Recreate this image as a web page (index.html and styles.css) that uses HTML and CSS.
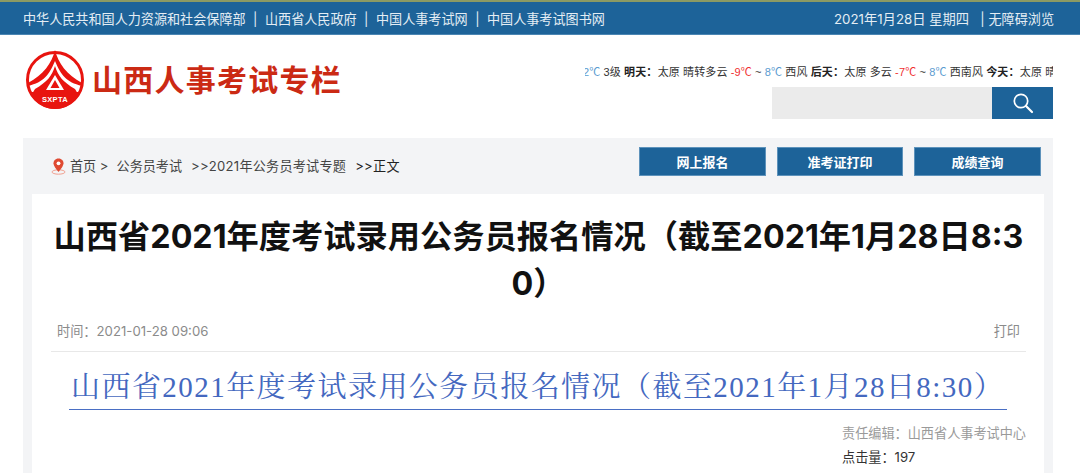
FILE: index.html
```html
<!DOCTYPE html>
<html lang="zh-CN">
<head>
<meta charset="utf-8">
<title>山西人事考试专栏</title>
<link rel="stylesheet" href="styles.css">
</head>
<body>
<div class="strip"></div>
<div class="topbar">
  <div class="links">
    <a>中华人民共和国人力资源和社会保障部</a><i>|</i><a>山西省人民政府</a><i>|</i><a>中国人事考试网</a><i>|</i><a>中国人事考试图书网</a>
  </div>
  <div class="date"><span class="today">2021年1月28日 星期四</span><i>|</i><a>无障碍浏览</a></div>
</div>
<header class="header">
  <div class="brand">
    <svg class="logo" width="60" height="62" viewBox="0 0 60 62">
      <circle cx="30" cy="31" r="27.5" fill="#fff" stroke="#e8140f" stroke-width="3"/>
      <path d="M30 1 C33 14 42 26 57 34 L57 37 C41 33 36 26 30 12 C24 26 19 33 3 37 L3 34 C18 26 27 14 30 1Z" fill="#e8140f"/>
      <path d="M30 17 C33 27 38 33 50 40 L53 45 C55 43 10 43 7 45 L10 40 C22 33 27 27 30 17Z" fill="#e8140f"/>
      <path d="M30 26 L39 41 L21 41Z" fill="#fff"/>
      <path d="M30 31 L34.5 39 L25.5 39Z" fill="#e8140f"/>
      <path d="M5 43 L55 43 C51 53 41 60 30 60 C19 60 9 53 5 43Z" fill="#e8140f"/>
      <text x="30" y="53" class="logo-text">SXPTA</text>
    </svg>
    <div class="site-name">山西人事考试专栏</div>
  </div>
  <div class="tools">
    <div class="ticker"><div class="ticker-inner"><s>2℃</s> 3级 <b>明天：</b> 太原 晴转多云 <em>-9℃</em> ~ <s>8℃</s> 西风 <b>后天：</b> 太原 多云 <em>-7℃</em> ~ <s>8℃</s> 西南风 <b>今天：</b> 太原 晴</div></div>
    <div class="search">
      <div class="search-input"></div>
      <div class="search-btn">
        <svg width="22" height="22" viewBox="0 0 22 22" fill="none" stroke="#fff" stroke-linecap="round"><circle cx="9" cy="9" r="6.7" stroke-width="1.7"/><path d="M14 14 L20 20" stroke-width="2.2"/></svg>
      </div>
    </div>
  </div>
</header>
<main class="panel">
  <div class="crumbs-row">
    <div class="crumbs">
      <svg width="15" height="17" viewBox="0 0 15 17"><ellipse cx="7.5" cy="14" rx="6.5" ry="2.2" fill="none" stroke="#f0a090" stroke-width="1"/><path d="M7.5 0.5 C4.2 0.5 2.5 3 2.5 5.3 C2.5 8.5 7.5 14 7.5 14 C7.5 14 12.5 8.5 12.5 5.3 C12.5 3 10.8 0.5 7.5 0.5Z" fill="#df4a32"/><circle cx="7.5" cy="5.3" r="1.9" fill="#fff"/></svg>
      <span class="c1">首页 &gt;</span><span class="c2">公务员考试</span><span class="c3">&gt;&gt;2021年公务员考试专题</span><span class="c4">&gt;&gt;正文</span>
    </div>
    <nav class="btns"><a class="btn b1">网上报名</a><a class="btn b2">准考证打印</a><a class="btn b3">成绩查询</a></nav>
  </div>
  <article class="article">
    <h1 class="title">山西省2021年度考试录用公务员报名情况（截至2021年1月28日8:30）</h1>
    <div class="meta"><span>时间：2021-01-28 09:06</span><span>打印</span></div>
    <h2 class="doc-title">山西省2021年度考试录用公务员报名情况（截至2021年1月28日8:30）</h2>
    <div class="credits">
      <div class="editor">责任编辑：山西省人事考试中心</div>
      <div class="hits">点击量：197</div>
    </div>
  </article>
</main>
</body>
</html>
```
FILE: styles.css
```css
* { box-sizing: border-box; }
html, body { margin: 0; padding: 0; height: 473px; overflow: hidden; background: #fff; }
body { font-family: Inter, "Noto Sans CJK SC", sans-serif; color: #333; }
a { color: inherit; text-decoration: none; }
i { font-style: normal; }

.strip { height: 2px; background: #8c9a63; }
.topbar {
  height: 33px; background: #1d6399; border-bottom: 1px solid #4b86b3; color: #e4edf4;
  font-size: 13.1px; display: flex; justify-content: space-between; align-items: center;
  padding: 0 26px 0 23px;
}
.links i { margin: 0 7.5px; }
.today { font-size: 13.3px; }
.date i { margin: 0 4px 0 11px; }

.header { height: 103px; display: flex; justify-content: space-between; padding: 0 27px 0 25px; }
.brand { display: flex; align-items: flex-start; padding-top: 14px; }
.logo { display: block; flex: none; }
.logo-text { font: bold 7.5px "Liberation Sans", sans-serif; fill: #fff; text-anchor: middle; letter-spacing: .3px; }
.site-name {
  margin: 15px 0 0 7px; font-size: 30px; line-height: 32px; font-weight: 700;
  color: #cb2a14; letter-spacing: 1.25px; white-space: nowrap;
}
.tools { width: 468px; display: flex; flex-direction: column; align-items: flex-end; padding-top: 28px; }
.ticker {
  width: 468px; height: 18px; overflow: hidden; font-family: "Liberation Sans", "Noto Sans CJK SC", sans-serif;
  font-size: 11px; line-height: 18px; color: #333;
}
.ticker-inner { white-space: nowrap; margin-left: -2px; letter-spacing: .12px; }
.ticker b { font-weight: 700; color: #222; margin-right: -3px; }
.ticker em { font-style: normal; color: #f03030; }
.ticker s { text-decoration: none; color: #5b9bd0; }
.search { display: flex; width: 281px; height: 32px; margin-top: 6px; }
.search-input { flex: 1; background: #ebebeb; }
.search-btn { width: 61px; background: #1d6399; display: flex; align-items: center; justify-content: center; }

.panel { margin: 0 27px 0 23px; height: 335px; background: #f3f4f6; padding: 0 9px; }
.crumbs-row { height: 56px; display: flex; justify-content: space-between; align-items: flex-start; }
.crumbs { display: flex; align-items: center; font-size: 13.1px; color: #444; padding: 19px 0 0 19px; line-height: 18px; }
.crumbs svg { margin-right: 4px; }
.c1 { margin-right: 8px; }
.c2 { margin-right: 9px; }
.c3 { margin-right: 9px; letter-spacing: .25px; }
.c4 { color: #222; letter-spacing: .3px; }
.btns { display: flex; gap: 11px; padding: 9px 3px 0 0; }
.btn {
  height: 29px; padding-bottom: 1px; background: #1d6399; border: 1px solid #5d92bb; color: #fff; font-size: 13px; font-weight: 700;
  display: flex; align-items: center; justify-content: center;
}
.b1 { width: 127px; }
.b2 { width: 126px; }
.b3 { width: 127px; }

.article { background: #fff; height: 279px; padding: 0 18px 0 19px; }
.title {
  margin: 0; padding: 19px 0 0 0; font-size: 32.25px; line-height: 47px; font-weight: 700; color: #111;
  text-align: center; word-break: break-all;
}
.meta {
  margin-top: 14px; height: 31px; border-bottom: 1px solid #e8e8e8; padding: 0 6px; font-size: 13.2px; line-height: 20px;
  color: #8b8b8b; display: flex; justify-content: space-between; align-items: flex-start;
}
.doc-title {
  margin: 0 19px 0 18px; padding: 2px 0 0 2px; height: 58px; border-bottom: 1px solid #4a6fc4;
  font-family: "Liberation Serif", "Noto Serif CJK SC", "Noto Sans CJK SC", serif; font-weight: 400;
  font-size: 29px; line-height: 67px; letter-spacing: 1.45px; color: #4468bf; white-space: nowrap; overflow: hidden;
}
.credits { padding: 13px 0 0 791px; font-size: 13.15px; line-height: 20px; white-space: nowrap; }
.editor { color: #9a9a9a; }
.hits { color: #333; margin-top: 4px; }
```
